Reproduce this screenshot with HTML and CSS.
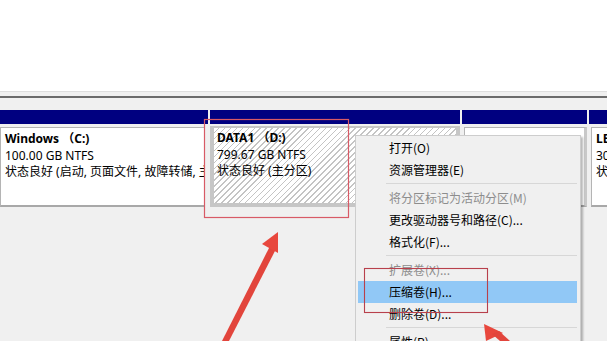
FILE: index.html
```html
<!DOCTYPE html>
<html lang="zh-CN">
<head>
<meta charset="utf-8">
<title>磁盘管理</title>
<link rel="stylesheet" href="styles.css">
</head>
<body>
<div class="page">
  <div class="top-pane"></div>
  <div class="rule"></div>
  <div class="disk">
    <div class="part part-c">
      <div class="part-head"></div>
      <div class="part-body">
        <div class="name">Windows （C:)</div>
        <div>100.00 GB NTFS</div>
        <div>状态良好 (启动, 页面文件, 故障转储, 主分区)</div>
      </div>
    </div>
    <div class="part part-d">
      <div class="part-head"></div>
      <div class="part-body hatched">
        <div class="name">DATA1 （D:)</div>
        <div>799.67 GB NTFS</div>
        <div>状态良好 (主分区)</div>
      </div>
    </div>
    <div class="part part-e">
      <div class="part-head"></div>
      <div class="part-body">
        <div class="dot"></div>
      </div>
    </div>
    <div class="part part-f">
      <div class="part-head"></div>
      <div class="part-body">
        <div class="name">LENOVO</div>
        <div>30.00 GB NTFS</div>
        <div>状态良好 (OEM 分区)</div>
      </div>
    </div>
  </div>

  <div class="menu">
    <div class="item">打开(O)</div>
    <div class="item">资源管理器(E)</div>
    <div class="sep"></div>
    <div class="item disabled">将分区标记为活动分区(M)</div>
    <div class="item">更改驱动器号和路径(C)...</div>
    <div class="item">格式化(F)...</div>
    <div class="sep"></div>
    <div class="item disabled">扩展卷(X)...</div>
    <div class="item active">压缩卷(H)...</div>
    <div class="item">删除卷(D)...</div>
    <div class="sep"></div>
    <div class="item">属性(P)</div>
  </div>

  <svg class="marks" width="607" height="341" viewBox="0 0 607 341">
    <rect x="204.5" y="119.5" width="144" height="98" fill="none" stroke="#d85a66" stroke-width="1.2"/>
    <rect x="364.5" y="268.5" width="123" height="44" fill="none" stroke="#b8404c" stroke-width="1.1"/>
    <polygon points="222,341 229,341 276,249 270,246" fill="#e2453c"/>
    <polygon points="278,232 262,244 278,253" fill="#e8473d"/>
    <polygon points="484,324 486,341 503,333" fill="#e8473d"/>
    <polygon points="492,334 499,331 510,341 500,341" fill="#e2453c"/>
  </svg>
</div>
</body>
</html>
```

FILE: styles.css
```css
* { box-sizing: border-box; }
html, body { margin: 0; padding: 0; }
body {
  width: 607px;
  height: 341px;
  overflow: hidden;
  background: #f0f0f0;
  font-family: "Noto Sans", "Noto Sans CJK SC", sans-serif;
  font-size: 12px;
  color: #000;
}
.page {
  position: relative;
  width: 607px;
  height: 341px;
  overflow: hidden;
}
.top-pane {
  height: 92px;
  background: #fff;
  border-bottom: 1px solid #dedede;
}
.rule {
  height: 2px;
  margin-top: 4px;
  background: #6b6b6b;
}
.disk {
  display: flex;
  gap: 2px;
  margin-top: 12px;
  background: #f0f0f0;
}
.part { flex: none; display: flex; flex-direction: column; }
.part-c { width: 208px; }
.part-d { width: 250px; }
.part-e { width: 125px; }
.part-f { width: 40px; }
.part-head {
  height: 14px;
  background: #000080;
}
.part-body {
  margin-top: 3px;
  height: 80px;
  background: #fff;
  border: 1px solid #b4b4b4;
  border-bottom: 2px solid #a8a8a8;
  padding: 3px 4px 0 4px;
  line-height: 16.5px;
  white-space: nowrap;
  overflow: hidden;
}
.part-c .part-body { margin-right: 3px; }
.part-e .part-body { margin-left: 2px; border-right: 3px solid #c8c8c8; }
.part-f .part-body { margin-left: 2px; padding-left: 4px; }
.name { font-weight: bold; }
.hatched {
  margin-top: 2px;
  height: 81px;
  border: 4px solid #c6c6c6;
  border-top-width: 2px;
  padding: 2px 3px 0 3px;
  background: repeating-linear-gradient(135deg, #ffffff 0 3.1px, #c4c4c4 3.1px 4.2px);
}
.dot {
  width: 2px;
  height: 2px;
  margin: 4px 0 0 16px;
  background: #333;
}
.menu {
  position: absolute;
  left: 355px;
  top: 135px;
  width: 226px;
  height: 220px;
  background: #f0f0f0;
  border: 1px solid #cdcdcd;
  box-shadow: 2px 2px 2px rgba(0,0,0,0.28);
  padding: 1px 3px 0 2px;
}
.item {
  height: 22px;
  line-height: 22px;
  padding-left: 31px;
  white-space: nowrap;
  font-family: "Noto Sans CJK SC", "Noto Sans", sans-serif;
}
.item.disabled { color: #8d8d8d; }
.item.active { background: #91c8f6; }
.sep {
  height: 6px;
  margin-left: 28px;
  position: relative;
}
.sep::after {
  content: "";
  position: absolute;
  left: 0; right: 0; top: 2px;
  height: 1px;
  background: #d7d7d7;
}
.marks {
  position: absolute;
  left: 0;
  top: 0;
  pointer-events: none;
}
```
